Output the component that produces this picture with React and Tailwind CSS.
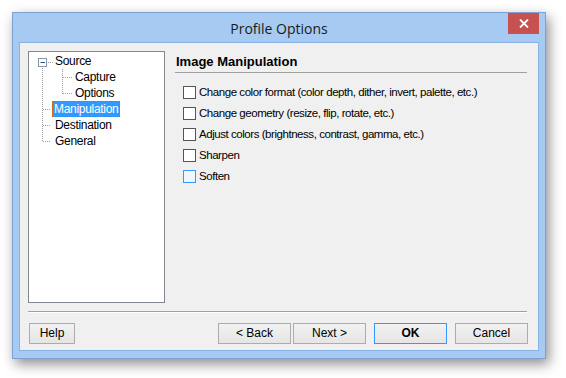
import React from "react";

const UI = { fontFamily: '"Liberation Sans", Arial, sans-serif' };

function TreeLines() {
  const c = "#a0a0a0";
  const d = "1 1";
  return (
    <svg className="absolute left-0 top-0" width="135" height="250" viewBox="0 0 135 250">
      <rect x="9.5" y="6.5" width="8" height="8" fill="#fff" stroke="#8c97a6" />
      <line x1="11.5" y1="10.5" x2="16" y2="10.5" stroke="#2c4f86" />
      <line x1="19" y1="10.5" x2="24" y2="10.5" stroke={c} strokeDasharray={d} />
      <line x1="13.5" y1="16" x2="13.5" y2="90" stroke={c} strokeDasharray={d} />
      <line x1="14" y1="57.5" x2="22" y2="57.5" stroke={c} strokeDasharray={d} />
      <line x1="14" y1="73.5" x2="22" y2="73.5" stroke={c} strokeDasharray={d} />
      <line x1="14" y1="89.5" x2="22" y2="89.5" stroke={c} strokeDasharray={d} />
      <line x1="33.5" y1="17" x2="33.5" y2="42" stroke={c} strokeDasharray={d} />
      <line x1="34" y1="25.5" x2="43" y2="25.5" stroke={c} strokeDasharray={d} />
      <line x1="34" y1="41.5" x2="43" y2="41.5" stroke={c} strokeDasharray={d} />
    </svg>
  );
}

function TreeRow({ label, indent, selected }) {
  return (
    <div className={"flex h-[16px] items-center leading-[16px] " + indent}>
      <span
        className={
          "px-[2px] h-[16px] leading-[16px] text-[12px] tracking-[-0.3px] " +
          (selected
            ? "bg-[#3399ff] text-white outline outline-1 outline-dotted outline-[#c86a1a] -outline-offset-1"
            : "text-black")
        }
      >
        {label}
      </span>
    </div>
  );
}

function Check({ label, hover }) {
  return (
    <div className="flex h-[21px] items-center gap-[3px] leading-[15px]">
      <div
        className={
          "w-[13px] h-[13px] shrink-0 border " +
          (hover ? "border-[#3399ff] bg-[#eef6ff]" : "border-[#555555] bg-white")
        }
      />
      <span className="text-[11.5px] text-black leading-[15px] tracking-[-0.45px] whitespace-nowrap">{label}</span>
    </div>
  );
}

function Btn({ children, w, def, className = "" }) {
  return (
    <div
      className={
        "h-[21px] flex items-center justify-center text-[12px] leading-[15px] text-black bg-gradient-to-b from-[#f2f2f2] to-[#e5e5e5] border " +
        (def ? "border-[#3399ff] font-bold" : "border-[#acacac]") +
        " " +
        w +
        " " +
        className
      }
    >
      {children}
    </div>
  );
}

export default function App() {
  return (
    <div className="w-[566px] h-[378px] bg-white pt-[12px] pl-[12px]" style={UI}>
      <div className="w-[534px] h-[347px] bg-[#a6caf1] border border-[#7ba2d3] flex flex-col shadow-[3px_5px_12px_rgba(0,0,0,0.45)]">
        {/* title bar */}
        <div className="relative h-[29px] shrink-0 flex items-center justify-center">
          <span
            className="text-[14px] leading-[18px] text-[#1a1a1a] pt-[2px]"
            style={{ fontFamily: '"Open Sans", "Noto Sans", sans-serif' }}
          >
            Profile Options
          </span>
          <div className="absolute right-[6px] top-0 w-[31px] h-[21px] bg-[#c75050] flex items-center justify-center">
            <svg width="10" height="9" viewBox="0 0 10 9">
              <path d="M1 0.5 L9 8.5 M9 0.5 L1 8.5" stroke="#fff" strokeWidth="1.8" />
            </svg>
          </div>
        </div>
        {/* client */}
        <div className="mx-[6px] mb-[7px] h-[309px] shrink-0 border border-[#87b2e4] bg-[#f0f0f0] flex flex-col pt-[8px] px-[8px]">
          <div className="flex h-[252px] shrink-0">
            {/* tree */}
            <div className="relative w-[137px] h-[252px] border border-[#828790] bg-white pt-[1px]">
              <TreeLines />
              <div className="relative flex flex-col">
                <TreeRow label="Source" indent="pl-[24px]" />
                <TreeRow label="Capture" indent="pl-[44px]" />
                <TreeRow label="Options" indent="pl-[44px]" />
                <TreeRow label="Manipulation" indent="pl-[23px]" selected />
                <TreeRow label="Destination" indent="pl-[24px]" />
                <TreeRow label="General" indent="pl-[24px]" />
              </div>
            </div>
            {/* right panel */}
            <div className="ml-[10px] w-[352px] flex flex-col">
              <div className="h-[22px] pt-[3px] pl-[1px] border-b border-[#a0a0a0] text-[13px] font-bold text-black leading-[16px]">
                Image Manipulation
              </div>
              <div className="mt-[9px] pl-[8px] flex flex-col">
                <Check label="Change color format (color depth, dither, invert, palette, etc.)" />
                <Check label="Change geometry (resize, flip, rotate, etc.)" />
                <Check label="Adjust colors (brightness, contrast, gamma, etc.)" />
                <Check label="Sharpen" />
                <Check label="Soften" hover />
              </div>
            </div>
          </div>
          {/* separator */}
          <div className="mt-[8px] w-[499px] h-[2px] shrink-0 border-t border-[#a0a0a0] border-b border-b-white" />
          {/* buttons */}
          <div className="mt-[10px] flex items-center">
            <Btn w="w-[46px]" className="ml-[1px]">Help</Btn>
            <Btn w="w-[73px]" className="ml-[143px]">&lt; Back</Btn>
            <Btn w="w-[73px]" className="ml-[2px]">Next &gt;</Btn>
            <Btn w="w-[73px]" className="ml-[8px]" def>OK</Btn>
            <Btn w="w-[73px]" className="ml-[8px]">Cancel</Btn>
          </div>
        </div>
      </div>
    </div>
  );
}
